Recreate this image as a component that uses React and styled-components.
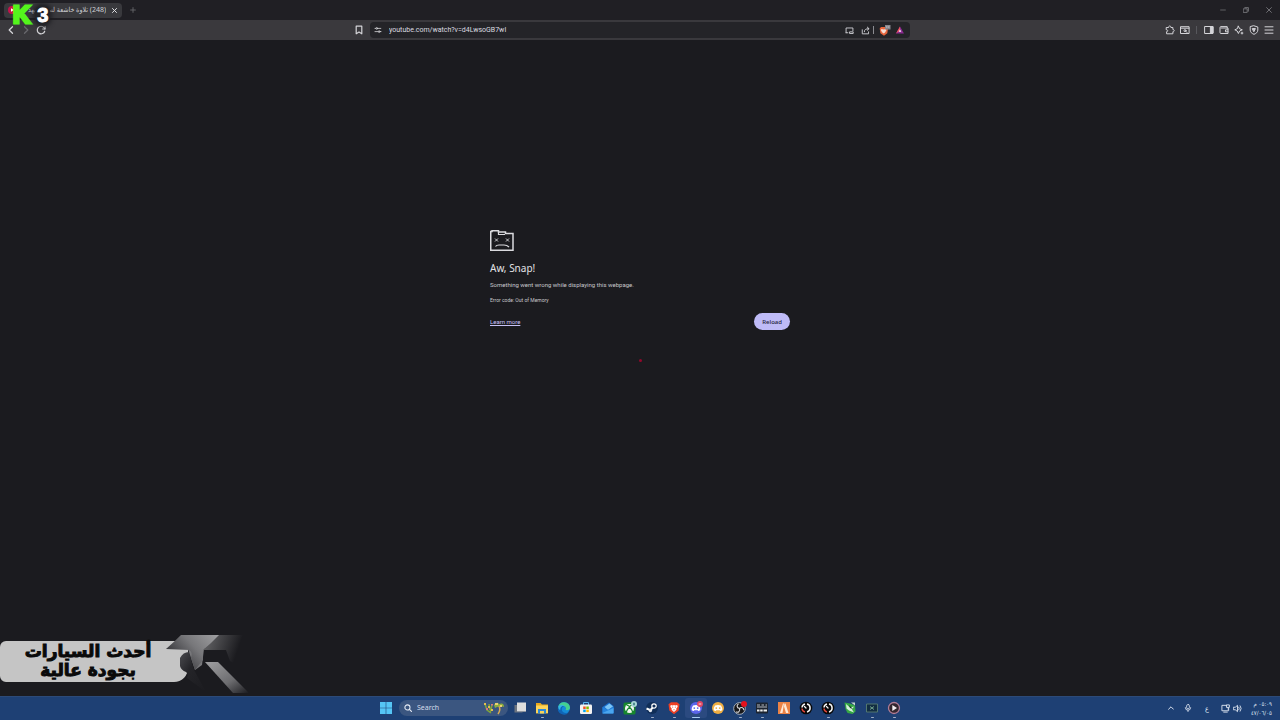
import styled, { createGlobalStyle, css } from "styled-components";

const uiFont = `"Noto Sans", "Open Sans", "DejaVu Sans Condensed", "DejaVu Sans", sans-serif`;
const textFont = `Roboto, "Noto Sans", sans-serif`;

const GlobalStyle = createGlobalStyle`
    * {
        box-sizing: border-box;
    }

    body {
        margin: 0;
        background: #1b1b1f;
        color: #e3e3e6;
        font-family: ${uiFont};
        font-size: 7px;
    }

    button,
    input {
        margin: 0;
        padding: 0;
        border: 0;
        background: none;
        color: inherit;
        font: inherit;
        outline: none;
    }

    svg {
        display: block;
        flex: none;
    }
`;

const Desktop = styled.div`
    position: relative;
    display: flex;
    flex-direction: column;
    min-height: 100vh;
`;

/* TAB STRIP */
const TabStrip = styled.header`
    display: flex;
    align-items: center;
    height: 20px;
    padding-left: 4px;
    background: #201f24;
`;

const Tab = styled.div`
    display: flex;
    align-items: center;
    gap: 4px;
    width: 118px;
    height: 15px;
    padding: 0 4px;
    border-radius: 4px;
    background: #39393d;
`;

const TabTitle = styled.span`
    flex: 1;
    overflow: hidden;
    color: #d0d0d4;
    font-size: 7px;
    line-height: 14px;
    white-space: nowrap;
`;

const StripButton = styled.button`
    display: grid;
    place-items: center;
    width: ${(props) => props.$width || 8}px;
    height: 15px;
    color: ${(props) => props.$color || "#b4b4b8"};
`;

const WindowControls = styled.div`
    display: flex;
    margin-left: auto;
`;

/* TOOLBAR */
const Toolbar = styled.div`
    display: grid;
    grid-template-columns: 1fr minmax(0, 540px) 1fr;
    align-items: center;
    height: 20px;
    background: #3a393d;
`;

const ToolGroup = styled.div`
    display: flex;
    align-items: center;
    justify-content: ${(props) => props.$justify || "flex-start"};
    padding: 0 4px 0 3px;
`;

const ToolButton = styled.button`
    display: grid;
    place-items: center;
    width: 15px;
    height: 16px;
    margin-right: ${(props) => (props.$push ? "auto" : 0)};
    color: ${(props) => (props.$dim ? "#68686d" : "#d4d4d8")};
`;

const Divider = styled.span`
    width: 1px;
    height: 8px;
    margin: 0 ${(props) => props.$space || 0}px;
    background: ${(props) => props.$color || "#57575c"};
`;

const AddressBar = styled.div`
    display: flex;
    align-items: center;
    height: 16px;
    padding-right: 3px;
    border-radius: 4px;
    background: #242428;
`;

const AddressInput = styled.input`
    flex: 1;
    min-width: 0;
    padding-left: 4px;
    color: #dcdce0;
    font-family: ${textFont};
    font-size: 7px;
    line-height: 14px;
`;

/* PAGE */
const Page = styled.main`
    flex: 1;
    padding: 190px 16px 0;
`;

const ErrorBox = styled.section`
    max-width: 300px;
    margin: 0 auto;
`;

const Title = styled.h1`
    margin: 9px 0 0;
    font-size: 10px;
    font-weight: 400;
    line-height: 16px;
`;

const Message = styled.p`
    margin: 4px 0 0;
    color: #c8c8cc;
    font-family: ${textFont};
    font-size: 6px;
    line-height: 10px;
`;

const ErrorCode = styled.p`
    margin: 5px 0 0;
    color: #c8c8cc;
    font-family: ${textFont};
    font-size: 5px;
    line-height: 10px;
`;

const Actions = styled.div`
    display: flex;
    align-items: center;
    justify-content: space-between;
    margin-top: 8px;
`;

const LearnMore = styled.a`
    color: #c6c2f6;
    font-family: ${textFont};
    font-size: 6px;
`;

const ReloadButton = styled.button`
    height: 17px;
    padding: 0 8px;
    border-radius: 9px;
    background: #bfbbf7;
    color: #24243a;
    font-size: 6px;
    font-weight: 500;
`;

/* OVERLAYS */
const Crosshair = styled.span`
    position: absolute;
    top: 50%;
    left: 50%;
    width: 3px;
    height: 3px;
    margin: -1px;
    border-radius: 50%;
    background: #92082b;
`;

const Stamp = styled.div`
    position: absolute;
    top: 3px;
    left: 13px;
    display: flex;
    align-items: center;
    gap: 5px;
    font-family: "Liberation Sans", sans-serif;
    font-weight: 700;
    line-height: 23px;
`;

const StampLetter = styled.span`
    color: #54f51c;
    font-size: 24px;
    -webkit-text-stroke: 3px #54f51c;
`;

const StampNumber = styled.span`
    padding: 0 2px;
    border-radius: 8px;
    background: #232327;
    box-shadow: 0 0 4px 2px rgba(27, 27, 31, 0.8);
    color: #fff;
    font-size: 20px;
    line-height: 20px;
    -webkit-text-stroke: 1px #fff;
`;

const Banner = styled.aside`
    position: absolute;
    bottom: 24px;
    left: 0;
    display: flex;
    height: 64px;
`;

const BannerLabel = styled.p`
    width: 188px;
    height: 41px;
    margin: 9px 0 0;
    padding: 1px 12px 0 0;
    border-radius: 6px 0 14px 6px;
    background: #c5c5c5;
    color: #0a0a0a;
    direction: rtl;
    font-family: "DejaVu Sans", sans-serif;
    font-size: 17px;
    font-weight: 700;
    line-height: 19px;
    text-align: center;
    -webkit-text-stroke: 1px #0a0a0a;
`;

const BannerArt = styled.svg`
    margin-left: -24px;
`;

/* TASKBAR */
const Taskbar = styled.footer`
    display: grid;
    grid-template-columns: 1fr auto 1fr;
    align-items: center;
    height: 24px;
    background: #1e4074;
    box-shadow: inset 0 1px #2c4a78;
`;

const Dock = styled.nav`
    display: flex;
    align-items: center;
    grid-column: 2;
`;

const DockButton = styled.button`
    position: relative;
    display: grid;
    place-items: center;
    width: 22px;
    height: 20px;
    border-radius: 3px;

    ${(props) =>
        props.$active &&
        css`
            background: #2b4a80;
        `}

    ${(props) =>
        props.$running &&
        css`
            &::after {
                content: "";
                position: absolute;
                bottom: 0;
                width: ${props.$active ? 8 : 3}px;
                height: 1px;
                border-radius: 1px;
                background: ${props.$active ? "#a9cdf5" : "#a0aec8"};
            }
        `}
`;

const SearchBox = styled.label`
    display: flex;
    align-items: center;
    gap: 5px;
    width: 109px;
    height: 16px;
    margin: 0 1px 0 2px;
    padding: 0 3px 0 5px;
    border-radius: 8px;
    background: #3b5680;
    color: #e6ecf5;
`;

const SearchInput = styled.input`
    flex: 1;
    min-width: 0;
    font-size: 7px;
    line-height: 14px;

    &::placeholder {
        color: #d4dcea;
        opacity: 1;
    }
`;

const Tray = styled.div`
    display: flex;
    align-items: center;
    justify-content: flex-end;
    padding-right: 8px;
    color: #dfe6f2;
`;

const TrayButton = styled.button`
    display: grid;
    place-items: center;
    width: ${(props) => props.$width}px;
    height: 20px;
`;

const Clock = styled.time`
    min-width: 25px;
    margin-left: 5px;
    direction: rtl;
    font-family: "DejaVu Sans Condensed", "DejaVu Sans", sans-serif;
    font-size: 6px;
    line-height: 9px;
    text-align: right;
    white-space: nowrap;
`;

const Line = ({ size = 10, children }) => (
    <svg
        width={size}
        height={size}
        viewBox="0 0 10 10"
        fill="none"
        stroke="currentColor"
        strokeLinecap="round"
        strokeLinejoin="round"
        aria-hidden="true"
    >
        {children}
    </svg>
);

const AppIcon = ({ children }) => (
    <svg width="14" height="14" viewBox="0 0 14 14" aria-hidden="true">
        {children}
    </svg>
);

const toolIcons = {
    back: <path d="M6.5 1.8 3.2 5l3.3 3.2" strokeWidth="1.3" />,
    forward: <path d="M3.5 1.8 6.8 5 3.5 8.2" strokeWidth="1.3" />,
    reload: (
        <>
            <path d="M8.7 6.2A3.8 3.8 0 1 1 8 2.6L9 4" strokeWidth="1.2" />
            <path d="M9.1 1.6V4H6.7" />
        </>
    ),
    bookmark: <path d="M2.2 1.2h5.6v7.6L5 7 2.2 8.8z" strokeWidth="1.2" />,
    tune: (
        <>
            <path d="M1.2 3h1.3M4.5 3h4M1.2 7h4M7.6 7h1.2" />
            <circle cx="3.5" cy="3" r="1.1" />
            <circle cx="6.5" cy="7" r="1.1" />
        </>
    ),
    cast: (
        <>
            <path d="M1.2 7.5V2.2h7.6v3M1.2 7.5h2" />
            <path d="M5.5 6.5h3.6v1.8H5.5z" />
        </>
    ),
    share: (
        <>
            <path d="M1.4 4.2v4.5h7V6.5" />
            <path d="M3.7 6.4c0-2.4 1.5-3.4 5-3.4M7 1.2 8.9 3 7 4.8" />
        </>
    ),
    puzzle: (
        <path d="M1.6 2.5h2c-.3-2 2.6-2 2.3 0h2v2c1.7-.2 1.7 2.4 0 2.2v2.1H1.6V6.7c1.6.2 1.6-2.2 0-2z" />
    ),
    media: (
        <>
            <path d="M.9 1.7h8.2v6.8H.9zM1 3.2h8" />
            <circle cx="5" cy="5.6" r="1" />
            <path d="m5.8 6.3 1.2 1.2" />
        </>
    ),
    sidebar: (
        <>
            <path d="M1 1.5h8v7H1z" />
            <path d="M6.4 2v6H9V2z" fill="currentColor" />
        </>
    ),
    wallet: (
        <>
            <path d="M8.2 3V1.6H2Q1 1.6 1 2.6v5q0 .9 1 .9h7V3H2" />
            <path d="M9 4.8H6.5v2H9" />
        </>
    ),
    spark: (
        <>
            <path d="M4.4 1.2 5.6 3.7 8.3 4.8 5.6 6 4.4 8.5 3.2 6 .8 4.8l2.4-1.1z" />
            <path d="M8 7.2v1.8M7.1 8.1h1.8" />
        </>
    ),
    shield: (
        <>
            <path d="M5 .8 8.8 2v3.1C8.8 7.2 7 8.6 5 9.3 3 8.6 1.2 7.2 1.2 5.1V2z" />
            <path d="M3.6 3.6h2.8L5 6.4z" fill="currentColor" />
        </>
    ),
    menu: <path d="M1 1.8h8M1 5h8M1 8.2h8" />,
};

const rightTools = [
    ["sidebar", "Sidebar"],
    ["wallet", "Wallet"],
    ["spark", "Leo AI"],
    ["shield", "VPN"],
    ["menu", "Menu"],
];

const DiscordArt = ({ color }) => (
    <>
        <circle cx="7" cy="7" r="6" fill={color} />
        <path
            d="M4 4.5q3-1.2 6 0 1.4 2 1.3 4.6-.9.9-2 .9l-.6-.8H5.3l-.6.8q-1.1 0-2-.9Q2.6 6.5 4 4.5z"
            fill="#fff"
        />
        <circle cx="5.3" cy="7.1" r="0.9" fill={color} />
        <circle cx="8.7" cy="7.1" r="0.9" fill={color} />
    </>
);

const RingArt = () => (
    <>
        <circle cx="7" cy="7" r="6.3" fill="#08080a" />
        <path d="M8 3.1a4 4 0 0 1 0 7.8" fill="none" stroke="#f4f4f4" strokeWidth="1.5" />
        <path d="M6 3.1a4 4 0 0 0-3 3.400" fill="none" stroke="#f4f4f4" strokeWidth="1.5" />
        <path d="M3 7.5a4 4 0 0 0 3 3.4" fill="none" stroke="#e0463a" strokeWidth="1.5" />
        <path d="m5.500 5.500 1.500 1.500" stroke="#f4f4f4" strokeWidth="1.3" strokeLinecap="round" />
    </>
);

const dockApps = [
    {
        name: "Task view",
        art: (
            <>
                <path d="M1.5 4h8v7.5h-8z" fill="#6c7480" />
                <path d="M4 1.5h9V10H4z" fill="#dedede" />
                <path d="M4 10h9v1H4z" fill="#8d949f" />
            </>
        ),
    },
    {
        name: "File Explorer",
        running: true,
        art: (
            <>
                <path d="M1 2h4.5L7 3.5h6v9H1z" fill="#e9a91d" />
                <path d="M1 4.500h12V12H1z" fill="#fbd45a" />
                <path d="M3 8h8v4.5H3z" fill="#2b88d8" />
                <path d="M5 10h4v2.5H5z" fill="#fbd45a" />
            </>
        ),
    },
    {
        name: "Edge",
        art: (
            <>
                <circle cx="7" cy="7" r="6" fill="#168bd8" />
                <path d="M1.2 6A6 6 0 0 1 13 6.5c0 2-1.6 3-4.5 2.6C10 7 8.3 5 6 5 3.5 5 2 6 1.2 6z" fill="#46cf8e" />
                <path d="M1 6.5C2 4.5 5 4 7 5.3 4.5 6 4 9 6 11c2 1.4 4.5 1 5.7.2A6 6 0 0 1 1 6.5z" fill="#0f65b8" />
                <path d="M1.3 5.5C3 3.3 6 3.3 8 4.5c-3 0-5 1.7-4.7 4.6C1.8 8.500 1.2 7 1.300 5.500z" fill="#35b8e0" />
            </>
        ),
    },
    {
        name: "Microsoft Store",
        art: (
            <>
                <path d="M4.5 4V1.5h5V4" fill="none" stroke="#57b5ee" />
                <rect x="1" y="3.5" width="12" height="9.5" rx="1.2" fill="#f2f2f2" />
                <path d="M4.2 5.5h2.5V8H4.2z" fill="#f25022" />
                <path d="M7.3 5.5h2.5V8H7.3z" fill="#7fba00" />
                <path d="M4.2 8.6h2.5v2.5H4.2z" fill="#00a4ef" />
                <path d="M7.3 8.6h2.5v2.5H7.3z" fill="#ffb900" />
            </>
        ),
    },
    {
        name: "Outlook",
        art: (
            <>
                <path d="M1.5 6 8 1.5 12.500 5v7h-11z" fill="#1b6fce" />
                <path d="m3.5 6 5-3.5L12 5.5 7 9z" fill="#7cc4f5" />
                <path d="M1.5 6 7 9l5.5-3.500v6.200q0 .8-.8.8H2.300q-.8 0-.8-.8z" fill="#2583dd" />
                <path d="m1.500 12 11-5v5.500h-11z" fill="#4aa6ef" />
            </>
        ),
    },
    {
        name: "Xbox",
        art: (
            <>
                <rect x="0.5" y="1.5" width="12" height="12" rx="1.5" fill="#16872c" />
                <circle cx="6.500" cy="7.5" r="4.5" fill="#f2f7f2" />
                <path
                    d="M3.300 11c.5-2 2-3.800 3.200-4.800 1.200 1 2.700 2.800 3.200 4.800M3.600 4.200c1 0 2 .6 2.900 1.400.9-.8 1.900-1.400 2.900-1.400"
                    fill="none"
                    stroke="#16872c"
                    strokeWidth="1.3"
                />
                <circle cx="11" cy="3" r="3" fill="#a9d5d6" />
                <path d="M10 1.800h2v2.400h-2z" fill="#4e8c8f" />
            </>
        ),
    },
    {
        name: "Steam",
        running: true,
        art: (
            <>
                <circle cx="7" cy="7" r="6" fill="#102e58" />
                <path d="m1.5 7.5 4 1.600 3-3.600" fill="none" stroke="#fff" strokeWidth="2" />
                <circle cx="9" cy="5" r="2.2" fill="#102e58" stroke="#fff" strokeWidth="1.2" />
                <circle cx="5.4" cy="9.5" r="1.7" fill="#e7ebf1" />
            </>
        ),
    },
    {
        name: "Brave",
        running: true,
        art: (
            <>
                <path d="M4 1.2h6l2.5 2-.8 6.3L7 13.2 2.3 9.5l-.8-6.300z" fill="#ed3f24" />
                <path d="m3.8 4 2 .4L7 4l1.200.4 2-.4.5 1.800-1.500 2 .3 1L7 11 4.500 8.800l.3-1-1.500-2z" fill="#fff" />
                <path d="m4.800 5.500 1.500.6-.4 1zM9.200 5.500l-1.500.6.4 1zM6 8.500h2l-1 1z" fill="#ed3f24" />
            </>
        ),
    },
    {
        name: "Discord",
        running: true,
        active: true,
        art: (
            <>
                <DiscordArt color="#5b65ea" />
                <circle cx="11" cy="3" r="3" fill="#e04863" />
                <path d="M9.7 3h2.6" stroke="#ffd5dc" />
            </>
        ),
    },
    { name: "Discord Canary", art: <DiscordArt color="#efae42" /> },
    {
        name: "OBS Studio",
        running: true,
        art: (
            <>
                <circle cx="6.5" cy="7.5" r="5.8" fill="#18181a" stroke="#b7bdc7" strokeWidth="0.9" />
                <path
                    d="M6.500 7.500C3.500 7 3.500 4 5.500 3M6.500 7.500c2-2 4.500-.5 4.300 1.700M6.500 7.500c1 3-1.500 4.500-3.300 3.300"
                    fill="none"
                    stroke="#d9d9dc"
                    strokeWidth="1.1"
                />
                <circle cx="11" cy="3" r="3" fill="#e5121c" />
            </>
        ),
    },
    {
        name: "Recorder",
        running: true,
        art: (
            <>
                <rect x="1" y="1.5" width="12" height="11" rx="1" fill="#1c2430" />
                <path d="M2 4h3M6.500 4H9M10.500 4H12M2 6h10" stroke="#b5bac2" />
                <path d="M2 9.500h2.500M5.200 9.500h2.500M8.500 9.500H12" stroke="#eee" strokeWidth="2.2" />
            </>
        ),
    },
    {
        name: "FiveM",
        art: (
            <>
                <path d="M1 1h12v12H1z" fill="#ec8346" />
                <path d="m3 12 3-9.500h1L5.500 12zM7.500 2.500h1l3 9.500H9L7 5.500z" fill="#ffe9d7" />
            </>
        ),
    },
    { name: "Capture", art: <RingArt /> },
    { name: "Capture Pro", running: true, art: <RingArt /> },
    {
        name: "Green Parrot",
        art: (
            <>
                <path d="M1.500 1.500 7 2.500l5 2 .5 6-3 2.500-5-1-2-4z" fill="#36a844" />
                <path d="m3 3 4 3.500 4-1-2 3 2 3-5-2-2.500-2z" fill="#d5efdc" />
                <path d="m6 4 4 4-3-1z" fill="#153920" />
                <path d="M8 1.500h4v3z" fill="#c9d8cf" />
            </>
        ),
    },
    {
        name: "Monitor",
        running: true,
        art: (
            <>
                <path d="M1.500 3h11v8h-11z" fill="#122d42" stroke="#52776f" />
                <path d="m5 5.500 4 3M9 5.500l-4 3" stroke="#70a18c" />
            </>
        ),
    },
    {
        name: "Media player",
        running: true,
        art: (
            <>
                <circle cx="7" cy="7" r="5.5" fill="#33262f" stroke="#b17c96" strokeWidth="1.3" />
                <path d="m5.3 4 4.7 3-4.7 3z" fill="#f3eef1" />
            </>
        ),
    },
];

function BrowserTabs() {
    return (
        <TabStrip>
            <Tab>
                <svg width="8" height="8" viewBox="0 0 8 8" aria-hidden="true">
                    <circle cx="4" cy="4" r="4" fill="#c3124b" />
                    <path d="m3 2.300 3 1.700-3 1.700z" fill="#fff" />
                </svg>
                <TabTitle dir="rtl">(248) تلاوة خاشعة لسورة يهد</TabTitle>
                <StripButton aria-label="Close tab" $color="#e0e0e3">
                    <Line size={5}>
                        <path d="m1 1 8 8M9 1 1 9" strokeWidth="2" />
                    </Line>
                </StripButton>
            </Tab>
            <StripButton aria-label="New tab" $width={22} $color="#66666b">
                <Line size={6}>
                    <path d="M5 1v8M1 5h8" strokeWidth="1.5" />
                </Line>
            </StripButton>
            <WindowControls>
                <StripButton aria-label="Minimize" $width={23} $color="#66666b">
                    <Line size={6}>
                        <path d="M1 5h8" strokeWidth="1.5" />
                    </Line>
                </StripButton>
                <StripButton aria-label="Restore" $width={23} $color="#85858a">
                    <Line size={6}>
                        <path d="M1 3h6v6H1zM3 1h6v6" strokeWidth="1.3" />
                    </Line>
                </StripButton>
                <StripButton aria-label="Close" $width={23} $color="#85858a">
                    <Line size={6}>
                        <path d="m1 1 8 8M9 1 1 9" strokeWidth="1.3" />
                    </Line>
                </StripButton>
            </WindowControls>
        </TabStrip>
    );
}

function BrowserToolbar() {
    return (
        <Toolbar>
            <ToolGroup>
                <ToolButton aria-label="Back">
                    <Line>{toolIcons.back}</Line>
                </ToolButton>
                <ToolButton aria-label="Forward" $dim>
                    <Line>{toolIcons.forward}</Line>
                </ToolButton>
                <ToolButton aria-label="Reload page" $push>
                    <Line>{toolIcons.reload}</Line>
                </ToolButton>
                <ToolButton aria-label="Bookmark">
                    <Line>{toolIcons.bookmark}</Line>
                </ToolButton>
            </ToolGroup>
            <AddressBar>
                <ToolButton aria-label="Site settings">
                    <Line size={8}>{toolIcons.tune}</Line>
                </ToolButton>
                <AddressInput
                    aria-label="Address"
                    defaultValue="youtube.com/watch?v=d4LwsoGB7wI"
                    spellCheck={false}
                />
                <ToolButton aria-label="Picture in picture">
                    <Line size={9}>{toolIcons.cast}</Line>
                </ToolButton>
                <Divider $color="transparent" />
                <ToolButton aria-label="Share">
                    <Line size={9}>{toolIcons.share}</Line>
                </ToolButton>
                <Divider $color="#8c8c91" />
                <Divider $color="transparent" $space={1} />
                <ToolButton aria-label="Brave Shields">
                    <svg width="12" height="11" viewBox="0 0 12 11" aria-hidden="true">
                        <path d="M2 2h5l2 1.5-.7 4.700-3.300 2.500-3.600-2.500L.7 3.500z" fill="#e8653c" />
                        <path d="m2.300 4 2.500.5L7 4l.3 1.500L6 7.500 4.800 8.500 3.300 7.500 2 5.500z" fill="#f5ded6" />
                        <path d="M6 0h5.500v4.500H6z" fill="#85858c" />
                        <path d="M7.200 2h1.200M9.200 2h1.200" stroke="#d2d2d6" />
                    </svg>
                </ToolButton>
                <ToolButton aria-label="Brave Rewards">
                    <svg width="8" height="8" viewBox="0 0 8 8" aria-hidden="true">
                        <path d="M4 .5 8 7.500H0z" fill="#8c2a92" />
                        <path d="M4 .5v4L0 7.500z" fill="#f0525a" />
                        <path d="m4 3.500 1.300 2.300H2.700z" fill="#fff" />
                    </svg>
                </ToolButton>
            </AddressBar>
            <ToolGroup $justify="flex-end">
                <ToolButton aria-label="Extensions">
                    <Line>{toolIcons.puzzle}</Line>
                </ToolButton>
                <ToolButton aria-label="Media">
                    <Line>{toolIcons.media}</Line>
                </ToolButton>
                <Divider $space={4} />
                {rightTools.map(([icon, label]) => (
                    <ToolButton key={icon} aria-label={label}>
                        <Line>{toolIcons[icon]}</Line>
                    </ToolButton>
                ))}
            </ToolGroup>
        </Toolbar>
    );
}

function CrashPage() {
    return (
        <Page>
            <ErrorBox>
                <svg width="24" height="21" viewBox="0 0 24 21" aria-hidden="true">
                    <g fill="none" stroke="#dadade">
                        <path d="M.75 20.250V1.500H2V.750h6.500V2h7v1.500H23v16.750z" strokeWidth="1.5" />
                        <path d="M8.500 2v2.500H15" strokeWidth="1.2" />
                        <path d="m5 8.500 3 3M8 8.500l-3 3M16 8.500l3 3M19 8.500l-3 3" strokeWidth="0.9" />
                        <path d="M5.500 16.500q1-1.500 3.500-1.500h5q3 0 5 2" strokeWidth="1.2" />
                    </g>
                </svg>
                <Title>Aw, Snap!</Title>
                <Message>Something went wrong while displaying this webpage.</Message>
                <ErrorCode>Error code: Out of Memory</ErrorCode>
                <Actions>
                    <LearnMore href="#learn-more">Learn more</LearnMore>
                    <ReloadButton>Reload</ReloadButton>
                </Actions>
            </ErrorBox>
        </Page>
    );
}

function AdBanner() {
    return (
        <Banner>
            <BannerLabel>
                أحدث السيارات
                <br />
                بجودة عالية
            </BannerLabel>
            <BannerArt width="86" height="64" viewBox="164 632 86 64" aria-hidden="true">
                <defs>
                    <linearGradient id="steel" x1="0" x2="1" y1="0.6" y2="0">
                        <stop offset="0" stopColor="#2c2c30" />
                        <stop offset="0.5" stopColor="#77777a" />
                        <stop offset="1" stopColor="#a2a2a4" />
                    </linearGradient>
                    <linearGradient id="fade" x1="0" x2="1" y1="0" y2="0.3">
                        <stop offset="0" stopColor="#6a6a6c" />
                        <stop offset="0.9" stopColor="#1b1b1f" />
                    </linearGradient>
                    <linearGradient id="leg" x1="0" x2="1" y1="0" y2="1">
                        <stop offset="0" stopColor="#a0a0a2" />
                        <stop offset="0.6" stopColor="#6c6c6f" />
                        <stop offset="1" stopColor="#1b1b1f" />
                    </linearGradient>
                    <linearGradient id="shade" x1="0" x2="1" y1="0" y2="1">
                        <stop offset="0" stopColor="#4a4a4e" />
                        <stop offset="0.4" stopColor="#242428" />
                        <stop offset="1" stopColor="#1b1b1f" />
                    </linearGradient>
                </defs>
                <path d="M180 658q3-6 9-6l5 18 12 22-19-14q2-4-1-6-5-2-6-6z" fill="url(#shade)" />
                <path d="M188 649h16l-2 16-7 5z" fill="#77777a" />
                <path d="M166 649q8-7 15-14h39l-7 8-10 7v10l-8 10-4-12q2-6-2-8z" fill="url(#steel)" />
                <path d="M219 635h25q-7 18 0 35l-14-9-4-11h-23l8-7z" fill="url(#fade)" />
                <path d="M205 662h13l31 31h-16z" fill="url(#leg)" />
            </BannerArt>
        </Banner>
    );
}

function SystemTaskbar() {
    return (
        <Taskbar>
            <Dock aria-label="Taskbar">
                <DockButton aria-label="Start">
                    <AppIcon>
                        <path
                            d="M1 1h5.700v5.700H1zM7.300 1H13v5.700H7.300zM1 7.300h5.700V13H1zM7.300 7.300H13V13H7.300z"
                            fill="#55c5f5"
                        />
                    </AppIcon>
                </DockButton>
                <SearchBox>
                    <Line size={8}>
                        <circle cx="4.3" cy="4.3" r="3.2" strokeWidth="1.3" />
                        <path d="m6.800 6.800 2.500 2.500" strokeWidth="1.5" />
                    </Line>
                    <SearchInput aria-label="Search" placeholder="Search" />
                    <svg width="22" height="14" viewBox="0 0 22 14" aria-hidden="true">
                        <path d="m2 3 2 6 4 3M6 3l1 6M9 4 7 12" fill="none" stroke="#80a43b" strokeWidth="1.5" />
                        <path d="M1 2h2v2H1zM5 5h2v2H5zM8 8h2v2H8z" fill="#e4bd50" />
                        <path d="M3 7h2v2H3zM8 3h2v1.500H8z" fill="#d9777b" />
                        <path d="M11 4q3-4 5-1 5-2 5 3l-3-1-4 1-2 1z" fill="#8daf3d" />
                        <path d="M16 5q2 4-1 8" fill="none" stroke="#d8aa52" strokeWidth="1.5" />
                        <path d="M12 2h3v2h-3zM17 4h2v2h-2z" fill="#ecd072" />
                    </svg>
                </SearchBox>
                {dockApps.map((app) => (
                    <DockButton
                        key={app.name}
                        aria-label={app.name}
                        $running={app.running}
                        $active={app.active}
                    >
                        <AppIcon>{app.art}</AppIcon>
                    </DockButton>
                ))}
            </Dock>
            <Tray>
                <TrayButton aria-label="Show hidden icons" $width={16}>
                    <Line size={6}>
                        <path d="m1 7 4-4 4 4" strokeWidth="1.6" />
                    </Line>
                </TrayButton>
                <TrayButton aria-label="Microphone" $width={17}>
                    <Line size={8}>
                        <rect x="3.3" y="0.6" width="3.4" height="5.5" rx="1.7" />
                        <path d="M1.600 4.500q0 3.300 3.400 3.300t3.400-3.300M5 8v1.500" />
                    </Line>
                </TrayButton>
                <TrayButton aria-label="Arabic keyboard" $width={22}>
                    ع
                </TrayButton>
                <TrayButton aria-label="Network" $width={14}>
                    <Line size={9}>
                        <path d="M6 1.500H1v6h7.500V5M3 9h4" />
                        <path d="M6.500 1h2.800v2.800H6.500zM8 4v2" />
                    </Line>
                </TrayButton>
                <TrayButton aria-label="Volume" $width={10}>
                    <Line size={9}>
                        <path d="M.8 3.600h1.700L5 1.500v7L2.500 6.400H.8z" />
                        <path d="M6.500 3.500q1 1.500 0 3M8 2q2.300 3 0 6" />
                    </Line>
                </TrayButton>
                <Clock>
                    ٠٥:٠٩ م
                    <br />
                    ٤٧/٠٦/٠٥
                </Clock>
            </Tray>
        </Taskbar>
    );
}

function App() {
    return (
        <Desktop>
            <GlobalStyle />
            <BrowserTabs />
            <BrowserToolbar />
            <CrashPage />
            <SystemTaskbar />
            <Crosshair />
            <AdBanner />
            <Stamp>
                <StampLetter>K</StampLetter>
                <StampNumber>3</StampNumber>
            </Stamp>
        </Desktop>
    );
}

export default App;
